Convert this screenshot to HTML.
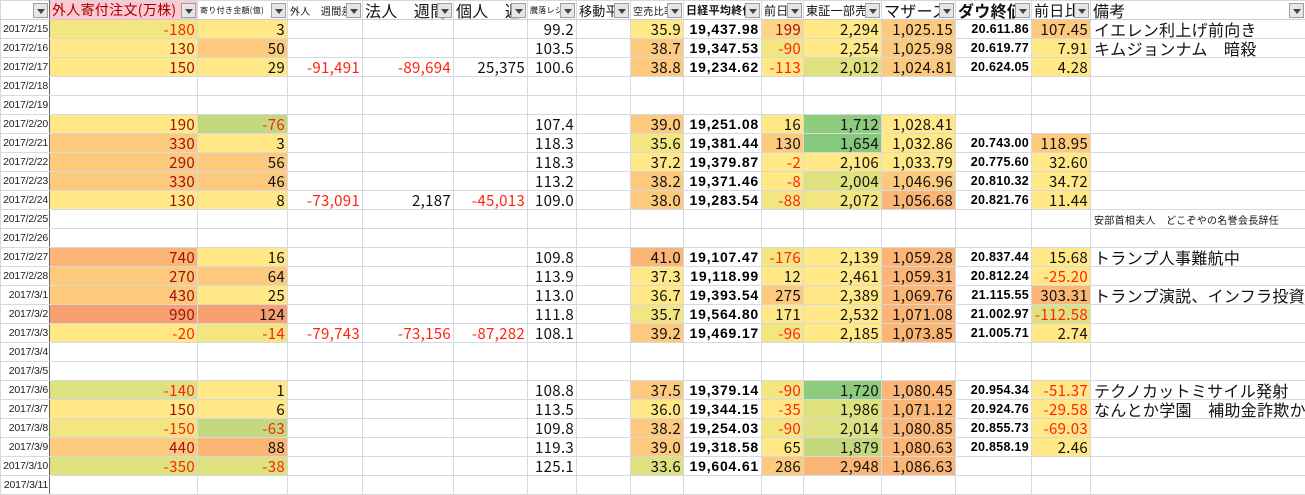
<!DOCTYPE html>
<html><head><meta charset="utf-8">
<style>
*{margin:0;padding:0;box-sizing:border-box}
body{width:1305px;height:491px;overflow:hidden;background:#fff;font-family:"Liberation Sans","Noto Sans CJK JP",sans-serif}
table{border-collapse:collapse;table-layout:fixed;width:1305px}
td{height:19px;border:1px solid #d4d9e3;text-align:right;padding:0 2px 0 0;font-size:15px;line-height:17px;white-space:nowrap;overflow:hidden;color:#111;font-family:"Noto Sans CJK JP",sans-serif;letter-spacing:0.3px}
td.d{font-size:10.5px;border-right:1px solid #666;letter-spacing:-0.2px;font-family:"Liberation Sans",sans-serif;color:#222;padding:0 1px 0 0;text-align:right}
td.a{color:#9c1010}
td.n{color:#f21}
td.k{font-weight:bold;font-family:"Liberation Sans",sans-serif;font-size:14px;letter-spacing:0.8px;color:#000}
td.w{font-weight:bold;font-family:"Liberation Sans",sans-serif;font-size:12.5px;color:#000}
td.m{text-align:left;padding-left:3px;font-size:16px}
td.s{text-align:left;padding-left:3px;font-size:10px}
tr.h td{height:19px;text-align:left;padding-left:2px;position:relative;font-size:13px;border-bottom:1px solid #c9cfd9}
tr.h td i{position:absolute;right:1px;top:2px;width:15px;height:15px;background:#e6e6e6;border:1px solid #9aa0a8;font-style:normal}
tr.h td i:after{content:"";position:absolute;left:3px;top:5px;border-left:4px solid transparent;border-right:4px solid transparent;border-top:5px solid #444}
.Y{background:#ffe885}.L{background:#f3e580}.g{background:#dfe17f}.G{background:#c4d97e}.G2{background:#8ecb7c}
.O{background:#fdc97d}.O2{background:#fbb574}.R{background:#f8a06f}
</style></head><body>
<table>
<colgroup><col style="width:49px"><col style="width:148px"><col style="width:90px"><col style="width:75px"><col style="width:91px"><col style="width:74px"><col style="width:49px"><col style="width:54px"><col style="width:53px"><col style="width:78px"><col style="width:42px"><col style="width:78px"><col style="width:74px"><col style="width:76px"><col style="width:59px"><col style="width:215px"></colgroup>
<tr class="h"><td class="d" style="font-size:11px"><i></i></td><td style="background:#ffc7ce;color:#9c0006;font-size:14px">外人寄付注文(万株)<i></i></td><td style="font-size:8px">寄り付き金額(億)<i></i></td><td style="font-size:10px">外人　週間差<i></i></td><td style="font-size:16px">法人　週間<i></i></td><td style="font-size:16px">個人　週<i></i></td><td style="font-size:8px">騰落レシオ<i></i></td><td style="font-size:13px">移動平<i></i></td><td style="font-size:10px">空売比率<i></i></td><td style="font-size:11px;font-weight:bold">日経平均終値<i></i></td><td style="font-size:12px">前日<i></i></td><td style="font-size:12px">東証一部売<i></i></td><td style="font-size:16px">マザーズ<i></i></td><td style="font-size:16px;font-weight:bold">ダウ終値<i></i></td><td style="font-size:15px">前日比<i></i></td><td style="font-size:16px">備考<i></i></td></tr>
<tr><td class="d">2017/2/15</td><td class="n L">-180</td><td class="Y">3</td><td></td><td></td><td></td><td>99.2</td><td></td><td class="Y">35.9</td><td class="k">19,437.98</td><td class="O a" style="background:#fed584">199</td><td class="Y">2,294</td><td class="O">1,025.15</td><td class="w">20.611.86</td><td class="O">107.45</td><td class="m">イエレン利上げ前向き</td></tr>
<tr><td class="d">2017/2/16</td><td class="a Y">130</td><td class="O">50</td><td></td><td></td><td></td><td>103.5</td><td></td><td class="O">38.7</td><td class="k">19,347.53</td><td class="n L">-90</td><td class="Y">2,254</td><td class="O">1,025.98</td><td class="w">20.619.77</td><td class="Y">7.91</td><td class="m">キムジョンナム　暗殺</td></tr>
<tr><td class="d">2017/2/17</td><td class="a Y">150</td><td class="Y">29</td><td class="n">-91,491</td><td class="n">-89,694</td><td>25,375</td><td>100.6</td><td></td><td class="O">38.8</td><td class="k">19,234.62</td><td class="n Y">-113</td><td class="g">2,012</td><td class="O">1,024.81</td><td class="w">20.624.05</td><td class="Y">4.28</td><td></td></tr>
<tr><td class="d">2017/2/18</td><td></td><td></td><td></td><td></td><td></td><td></td><td></td><td></td><td></td><td></td><td></td><td></td><td></td><td></td><td></td></tr>
<tr><td class="d">2017/2/19</td><td></td><td></td><td></td><td></td><td></td><td></td><td></td><td></td><td></td><td></td><td></td><td></td><td></td><td></td><td></td></tr>
<tr><td class="d">2017/2/20</td><td class="a Y">190</td><td class="n G">-76</td><td></td><td></td><td></td><td>107.4</td><td></td><td class="O">39.0</td><td class="k">19,251.08</td><td class="Y">16</td><td class="G2">1,712</td><td class="Y">1,028.41</td><td></td><td></td><td></td></tr>
<tr><td class="d">2017/2/21</td><td class="a O">330</td><td class="Y">3</td><td></td><td></td><td></td><td>118.3</td><td></td><td class="L">35.6</td><td class="k">19,381.44</td><td class="O">130</td><td class="G2" style="background:#86c87c">1,654</td><td class="Y">1,032.86</td><td class="w">20.743.00</td><td class="O">118.95</td><td></td></tr>
<tr><td class="d">2017/2/22</td><td class="a O">290</td><td class="O">56</td><td></td><td></td><td></td><td>118.3</td><td></td><td class="Y">37.2</td><td class="k">19,379.87</td><td class="n Y">-2</td><td class="Y">2,106</td><td class="Y">1,033.79</td><td class="w">20.775.60</td><td class="Y">32.60</td><td></td></tr>
<tr><td class="d">2017/2/23</td><td class="a O">330</td><td class="O">46</td><td></td><td></td><td></td><td>113.2</td><td></td><td class="O">38.2</td><td class="k">19,371.46</td><td class="n Y">-8</td><td class="g">2,004</td><td class="O">1,046.96</td><td class="w">20.810.32</td><td class="Y">34.72</td><td></td></tr>
<tr><td class="d">2017/2/24</td><td class="a Y">130</td><td class="Y">8</td><td class="n">-73,091</td><td>2,187</td><td class="n">-45,013</td><td>109.0</td><td></td><td class="O">38.0</td><td class="k">19,283.54</td><td class="n L">-88</td><td class="L">2,072</td><td class="O2">1,056.68</td><td class="w">20.821.76</td><td class="Y">11.44</td><td></td></tr>
<tr><td class="d">2017/2/25</td><td></td><td></td><td></td><td></td><td></td><td></td><td></td><td></td><td></td><td></td><td></td><td></td><td></td><td></td><td class="s">安部首相夫人　どこぞやの名誉会長辞任</td></tr>
<tr><td class="d">2017/2/26</td><td></td><td></td><td></td><td></td><td></td><td></td><td></td><td></td><td></td><td></td><td></td><td></td><td></td><td></td><td></td></tr>
<tr><td class="d">2017/2/27</td><td class="a O2">740</td><td class="Y">16</td><td></td><td></td><td></td><td>109.8</td><td></td><td class="O2">41.0</td><td class="k">19,107.47</td><td class="n L">-176</td><td class="Y">2,139</td><td class="O2">1,059.28</td><td class="w">20.837.44</td><td class="Y">15.68</td><td class="m">トランプ人事難航中</td></tr>
<tr><td class="d">2017/2/28</td><td class="a O">270</td><td class="O">64</td><td></td><td></td><td></td><td>113.9</td><td></td><td class="Y">37.3</td><td class="k">19,118.99</td><td class="Y">12</td><td class="Y">2,461</td><td class="O2">1,059.31</td><td class="w">20.812.24</td><td class="n Y">-25.20</td><td></td></tr>
<tr><td class="d">2017/3/1</td><td class="a O">430</td><td class="Y">25</td><td></td><td></td><td></td><td>113.0</td><td></td><td class="Y">36.7</td><td class="k">19,393.54</td><td class="O">275</td><td class="Y">2,389</td><td class="O2">1,069.76</td><td class="w">21.115.55</td><td class="O2">303.31</td><td class="m">トランプ演説、インフラ投資</td></tr>
<tr><td class="d">2017/3/2</td><td class="a R">990</td><td class="R">124</td><td></td><td></td><td></td><td>111.8</td><td></td><td class="L">35.7</td><td class="k">19,564.80</td><td class="Y">171</td><td class="Y">2,532</td><td class="O2">1,071.08</td><td class="w">21.002.97</td><td class="n g">-112.58</td><td></td></tr>
<tr><td class="d">2017/3/3</td><td class="n Y">-20</td><td class="n L">-14</td><td class="n">-79,743</td><td class="n">-73,156</td><td class="n">-87,282</td><td>108.1</td><td></td><td class="O">39.2</td><td class="k">19,469.17</td><td class="n L">-96</td><td class="Y">2,185</td><td class="O2">1,073.85</td><td class="w">21.005.71</td><td class="Y">2.74</td><td></td></tr>
<tr><td class="d">2017/3/4</td><td></td><td></td><td></td><td></td><td></td><td></td><td></td><td></td><td></td><td></td><td></td><td></td><td></td><td></td><td></td></tr>
<tr><td class="d">2017/3/5</td><td></td><td></td><td></td><td></td><td></td><td></td><td></td><td></td><td></td><td></td><td></td><td></td><td></td><td></td><td></td></tr>
<tr><td class="d">2017/3/6</td><td class="n g">-140</td><td class="Y">1</td><td></td><td></td><td></td><td>108.8</td><td></td><td class="O">37.5</td><td class="k">19,379.14</td><td class="n L">-90</td><td class="G2">1,720</td><td class="O2">1,080.45</td><td class="w">20.954.34</td><td class="n Y">-51.37</td><td class="m">テクノカットミサイル発射</td></tr>
<tr><td class="d">2017/3/7</td><td class="a Y">150</td><td class="Y">6</td><td></td><td></td><td></td><td>113.5</td><td></td><td class="Y">36.0</td><td class="k">19,344.15</td><td class="n Y">-35</td><td class="g">1,986</td><td class="O2">1,071.12</td><td class="w">20.924.76</td><td class="n Y">-29.58</td><td class="m">なんとか学園　補助金詐欺か</td></tr>
<tr><td class="d">2017/3/8</td><td class="n L">-150</td><td class="n G">-63</td><td></td><td></td><td></td><td>109.8</td><td></td><td class="O">38.2</td><td class="k">19,254.03</td><td class="n L">-90</td><td class="g">2,014</td><td class="O2">1,080.85</td><td class="w">20.855.73</td><td class="n Y">-69.03</td><td></td></tr>
<tr><td class="d">2017/3/9</td><td class="a O">440</td><td class="O2">88</td><td></td><td></td><td></td><td>119.3</td><td></td><td class="O">39.0</td><td class="k">19,318.58</td><td class="Y">65</td><td class="G">1,879</td><td class="O2">1,080.63</td><td class="w">20.858.19</td><td class="Y">2.46</td><td></td></tr>
<tr><td class="d">2017/3/10</td><td class="n g">-350</td><td class="n g">-38</td><td></td><td></td><td></td><td>125.1</td><td></td><td class="g">33.6</td><td class="k">19,604.61</td><td class="O">286</td><td class="O2">2,948</td><td class="O2">1,086.63</td><td></td><td></td><td></td></tr>
<tr><td class="d">2017/3/11</td><td></td><td></td><td></td><td></td><td></td><td></td><td></td><td></td><td></td><td></td><td></td><td></td><td></td><td></td><td></td></tr>
</table>
</body></html>
